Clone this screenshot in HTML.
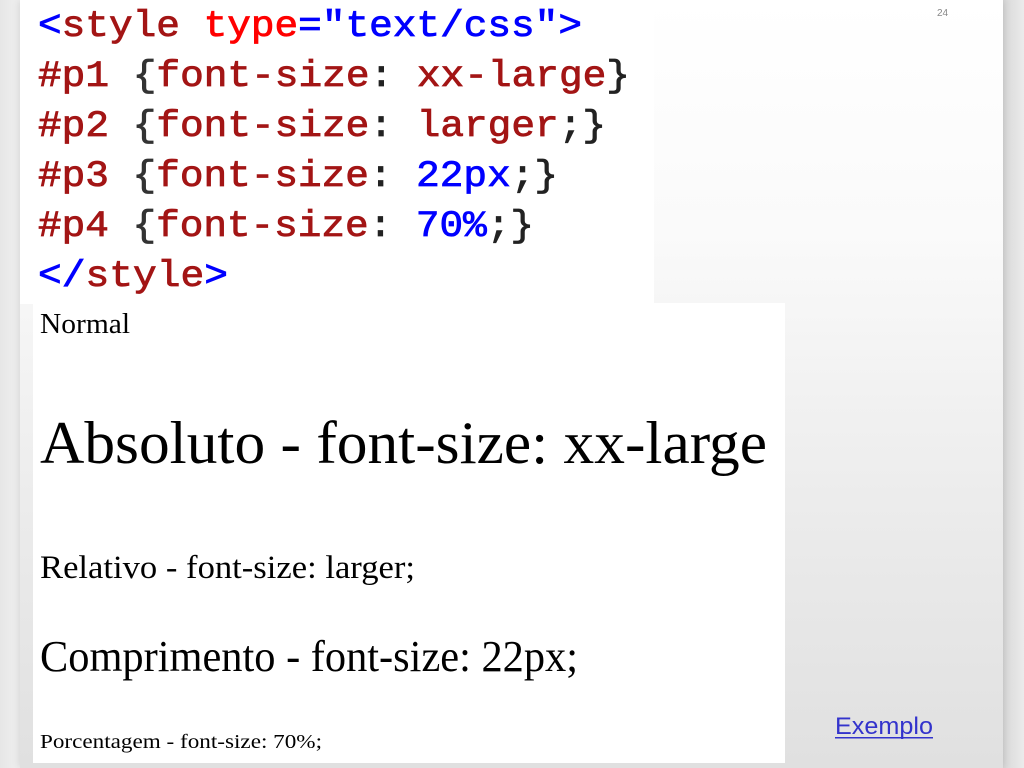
<!DOCTYPE html>
<html><head><meta charset="utf-8"><style>
html,body{margin:0;padding:0;width:1024px;height:768px;overflow:hidden;background:#e4e4e4;}
.slide{position:absolute;left:20px;top:0;width:983px;height:768px;background:linear-gradient(#ffffff 0%,#fafafa 30%,#ececec 65%,#e0e0e0 100%);box-shadow:0 0 8px rgba(0,0,0,0.15);}
.lside{position:absolute;left:0;top:0;width:20px;height:768px;background:linear-gradient(90deg,#e6e6e6,#f0f0f0);}
.rside{position:absolute;left:1003px;top:0;width:21px;height:768px;background:linear-gradient(90deg,#d8d8d8,#ebebeb);}
svg{position:absolute;left:0;top:0;}
</style></head><body>
<div class="lside"></div><div class="rside"></div>
<div class="slide"></div>
<div style="position:absolute;left:20px;top:0;width:634px;height:304px;background:#fff"></div>
<div style="position:absolute;left:33px;top:303px;width:752px;height:460px;background:#fff"></div>
<svg width="1024" height="768">
<g font-family="Liberation Mono, monospace" font-size="37" stroke-width="0.8">
<text x="38" y="36" textLength="544" lengthAdjust="spacingAndGlyphs"><tspan fill="#0000ff" stroke="#0000ff">&lt;</tspan><tspan fill="#a31515" stroke="#a31515">style</tspan> <tspan fill="#ff0000" stroke="#ff0000">type</tspan><tspan fill="#0000ff" stroke="#0000ff">="text/css"&gt;</tspan></text>
<text x="38" y="86" textLength="592" lengthAdjust="spacingAndGlyphs" fill="#a31515" stroke="#a31515">#p1 <tspan fill="#333" stroke="#333">{</tspan>font-size<tspan fill="#222" stroke="#222">:</tspan> xx-large<tspan fill="#222" stroke="#222">}</tspan></text>
<text x="38" y="136" textLength="568" lengthAdjust="spacingAndGlyphs" fill="#a31515" stroke="#a31515">#p2 <tspan fill="#333" stroke="#333">{</tspan>font-size<tspan fill="#222" stroke="#222">:</tspan> larger<tspan fill="#222" stroke="#222">;}</tspan></text>
<text x="38" y="186" textLength="520" lengthAdjust="spacingAndGlyphs" fill="#a31515" stroke="#a31515">#p3 <tspan fill="#333" stroke="#333">{</tspan>font-size<tspan fill="#222" stroke="#222">:</tspan> <tspan fill="#0000ff" stroke="#0000ff">22px</tspan><tspan fill="#222" stroke="#222">;}</tspan></text>
<text x="38" y="236" textLength="496" lengthAdjust="spacingAndGlyphs" fill="#a31515" stroke="#a31515">#p4 <tspan fill="#333" stroke="#333">{</tspan>font-size<tspan fill="#222" stroke="#222">:</tspan> <tspan fill="#0000ff" stroke="#0000ff">70%</tspan><tspan fill="#222" stroke="#222">;}</tspan></text>
<text x="38" y="286" textLength="190" lengthAdjust="spacingAndGlyphs"><tspan fill="#0000ff" stroke="#0000ff">&lt;/</tspan><tspan fill="#a31515" stroke="#a31515">style</tspan><tspan fill="#0000ff" stroke="#0000ff">&gt;</tspan></text>
</g>
<g font-family="Liberation Serif, serif" fill="#000">
<text x="40" y="333" font-size="28" textLength="90" lengthAdjust="spacingAndGlyphs">Normal</text>
<text x="40" y="463" font-size="60" textLength="727" lengthAdjust="spacingAndGlyphs">Absoluto - font-size: xx-large</text>
<text x="40" y="578" font-size="33" textLength="375" lengthAdjust="spacingAndGlyphs">Relativo - font-size: larger;</text>
<text x="40" y="671" font-size="44" textLength="538" lengthAdjust="spacingAndGlyphs">Comprimento - font-size: 22px;</text>
<text x="40" y="748" font-size="20" textLength="282" lengthAdjust="spacingAndGlyphs">Porcentagem - font-size: 70%;</text>
</g>
<text x="937" y="16" font-family="Liberation Sans, sans-serif" font-size="10" fill="#888">24</text>
<text x="835" y="734" font-family="Liberation Sans, sans-serif" font-size="24" fill="#3333cc" textLength="98" lengthAdjust="spacingAndGlyphs">Exemplo</text>
<rect x="835" y="737" width="98" height="1.5" fill="#3333cc"/>
</svg>
</body></html>
